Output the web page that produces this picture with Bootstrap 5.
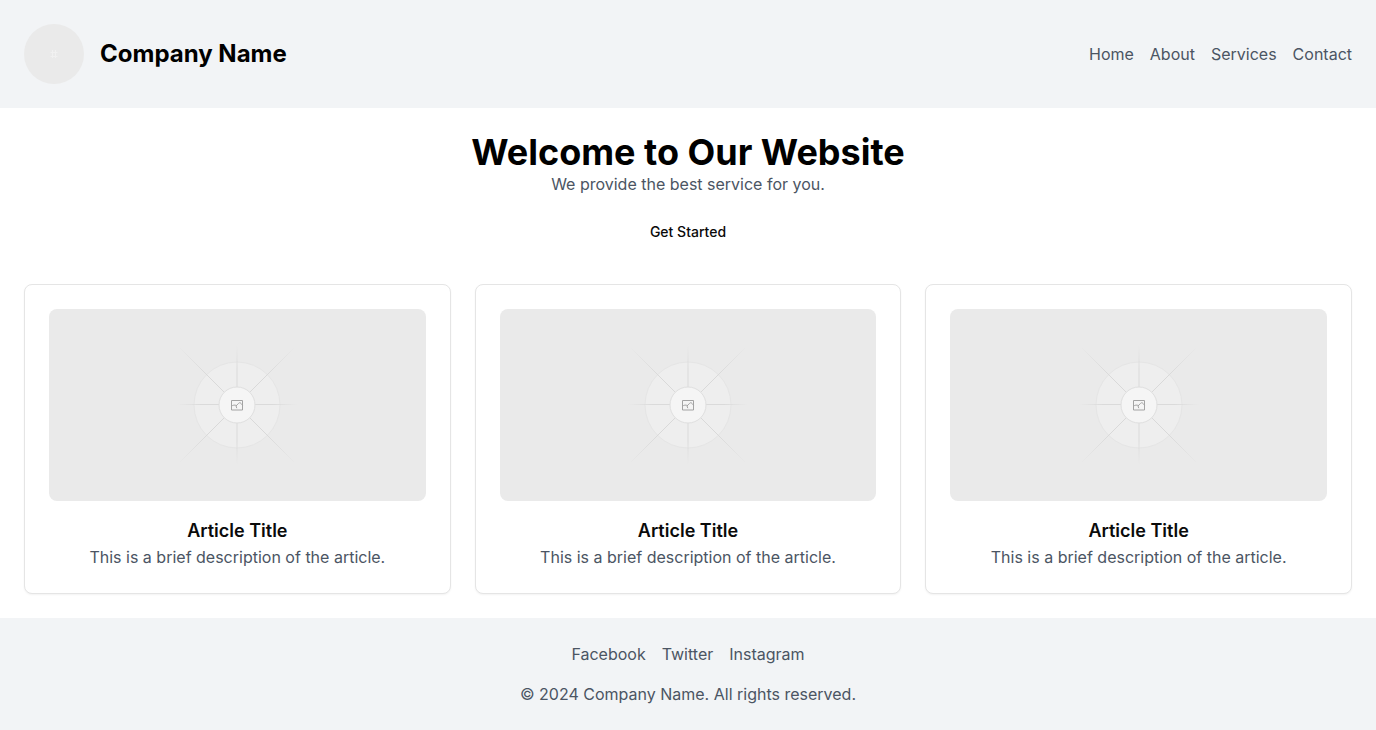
<!DOCTYPE html>
<html lang="en">
<head>
<meta charset="utf-8">
<meta name="viewport" content="width=device-width, initial-scale=1">
<title>Company Name</title>
<link href="https://cdn.jsdelivr.net/npm/bootstrap@5.3.0/dist/css/bootstrap.min.css" rel="stylesheet">
<style>
body { font-family: Inter, sans-serif; color: #000; background: #fff; line-height: 24px; }
.site-band { background: #f2f4f6; }
.site-band a, .muted-text { color: #4b5563; }
.site-band a { text-decoration: none; }
.site-band a:hover { text-decoration: underline; }
.brand-logo { width: 60px; height: 60px; }
.brand-name { font-size: 24px; line-height: 32px; font-weight: 700; }
.hero-title { font-size: 36px; line-height: 40px; font-weight: 700; }
.start-btn { --bs-btn-color: #0a0a0a; --bs-btn-font-size: 14px; --bs-btn-line-height: 20px; --bs-btn-font-weight: 500; --bs-btn-padding-x: 16px; --bs-btn-padding-y: 9px; }
.article-card { --bs-card-border-color: #e5e5e5; --bs-card-border-radius: 8px; box-shadow: 0 1px 2px rgba(0, 0, 0, .05); color: #0a0a0a; }
.article-art { height: 192px; border-radius: 8px; background: #eaeaea; }
.article-title { font-size: 18px; line-height: 28px; font-weight: 600; }
</style>
</head>
<body>
<svg class="position-absolute" width="0" height="0" aria-hidden="true">
  <defs>
    <radialGradient id="ray" gradientUnits="userSpaceOnUse" cx="60" cy="60" r="84">
      <stop offset="0.5" stop-color="#d9d9d9"/><stop offset="1" stop-color="#d9d9d9" stop-opacity="0"/>
    </radialGradient>
    <radialGradient id="ray-short" gradientUnits="userSpaceOnUse" cx="60" cy="60" r="60">
      <stop offset="0.6" stop-color="#dadada"/><stop offset="1" stop-color="#dadada" stop-opacity="0"/>
    </radialGradient>
    <symbol id="placeholder" viewBox="0 0 120 120">
      <circle cx="60" cy="60" r="43" fill="#eeeeee" stroke="#e5e5e5"/>
      <path d="M3 3 117 117M117 3 3 117" stroke="url(#ray)"/>
      <path d="M60 0V120M0 59.500H120" stroke="url(#ray-short)"/>
      <circle cx="60" cy="60" r="18" fill="#f5f5f5" stroke="#dfdfdf"/>
      <path d="M54.500 55.500h11v9.500h-11zM54.500 61.200c1.500-1.200 3.200-1.500 5-.6M59.800 63.200l-.8-2.200 2.500-2.600c.9-.9 1.700-.9 2.500 0l1.500 1.800" fill="none" stroke="#a3a3a3"/>
    </symbol>
  </defs>
</svg>
<header class="site-band p-4 d-flex flex-wrap gap-3 justify-content-between align-items-center">
  <div class="d-flex align-items-center gap-3">
    <svg class="brand-logo" viewBox="0 0 60 60" role="img" aria-label="Company logo"><circle cx="30" cy="30" r="30" fill="#eaeaea"/><path d="M28.500 26v8M31.500 26v8M26.500 28.500h7M26.500 32.500h7" stroke="#f1f1f1"/></svg>
    <h1 class="brand-name mb-0">Company Name</h1>
  </div>
  <nav class="d-flex flex-wrap gap-3" aria-label="Main"><a href="#">Home</a><a href="#">About</a><a href="#">Services</a><a href="#">Contact</a></nav>
</header>
<main class="p-4">
  <section class="text-center mb-4 pb-2">
    <h2 class="hero-title mb-0">Welcome to Our Website</h2>
    <p class="muted-text mb-3">We provide the best service for you.</p>
    <button type="button" class="btn start-btn">Get Started</button>
  </section>
  <div class="row row-cols-1 row-cols-md-3 g-4 text-center">
    <div class="col"><article class="card article-card h-100"><div class="card-body p-4">
      <div class="article-art d-flex align-items-center justify-content-center mb-3"><svg width="120" height="120" role="img" aria-label="Article image"><use href="#placeholder"/></svg></div>
      <h3 class="article-title mb-0">Article Title</h3><p class="muted-text mb-0">This is a brief description of the article.</p>
    </div></article></div>
    <div class="col"><article class="card article-card h-100"><div class="card-body p-4">
      <div class="article-art d-flex align-items-center justify-content-center mb-3"><svg width="120" height="120" role="img" aria-label="Article image"><use href="#placeholder"/></svg></div>
      <h3 class="article-title mb-0">Article Title</h3><p class="muted-text mb-0">This is a brief description of the article.</p>
    </div></article></div>
    <div class="col"><article class="card article-card h-100"><div class="card-body p-4">
      <div class="article-art d-flex align-items-center justify-content-center mb-3"><svg width="120" height="120" role="img" aria-label="Article image"><use href="#placeholder"/></svg></div>
      <h3 class="article-title mb-0">Article Title</h3><p class="muted-text mb-0">This is a brief description of the article.</p>
    </div></article></div>
  </div>
</main>
<footer class="site-band p-4 text-center">
  <nav class="d-flex flex-wrap justify-content-center gap-3 mb-3" aria-label="Social"><a href="#">Facebook</a><a href="#">Twitter</a><a href="#">Instagram</a></nav>
  <p class="muted-text mb-0">© 2024 Company Name. All rights reserved.</p>
</footer>
<script src="https://cdn.jsdelivr.net/npm/bootstrap@5.3.0/dist/js/bootstrap.bundle.min.js"></script>
</body>
</html>
